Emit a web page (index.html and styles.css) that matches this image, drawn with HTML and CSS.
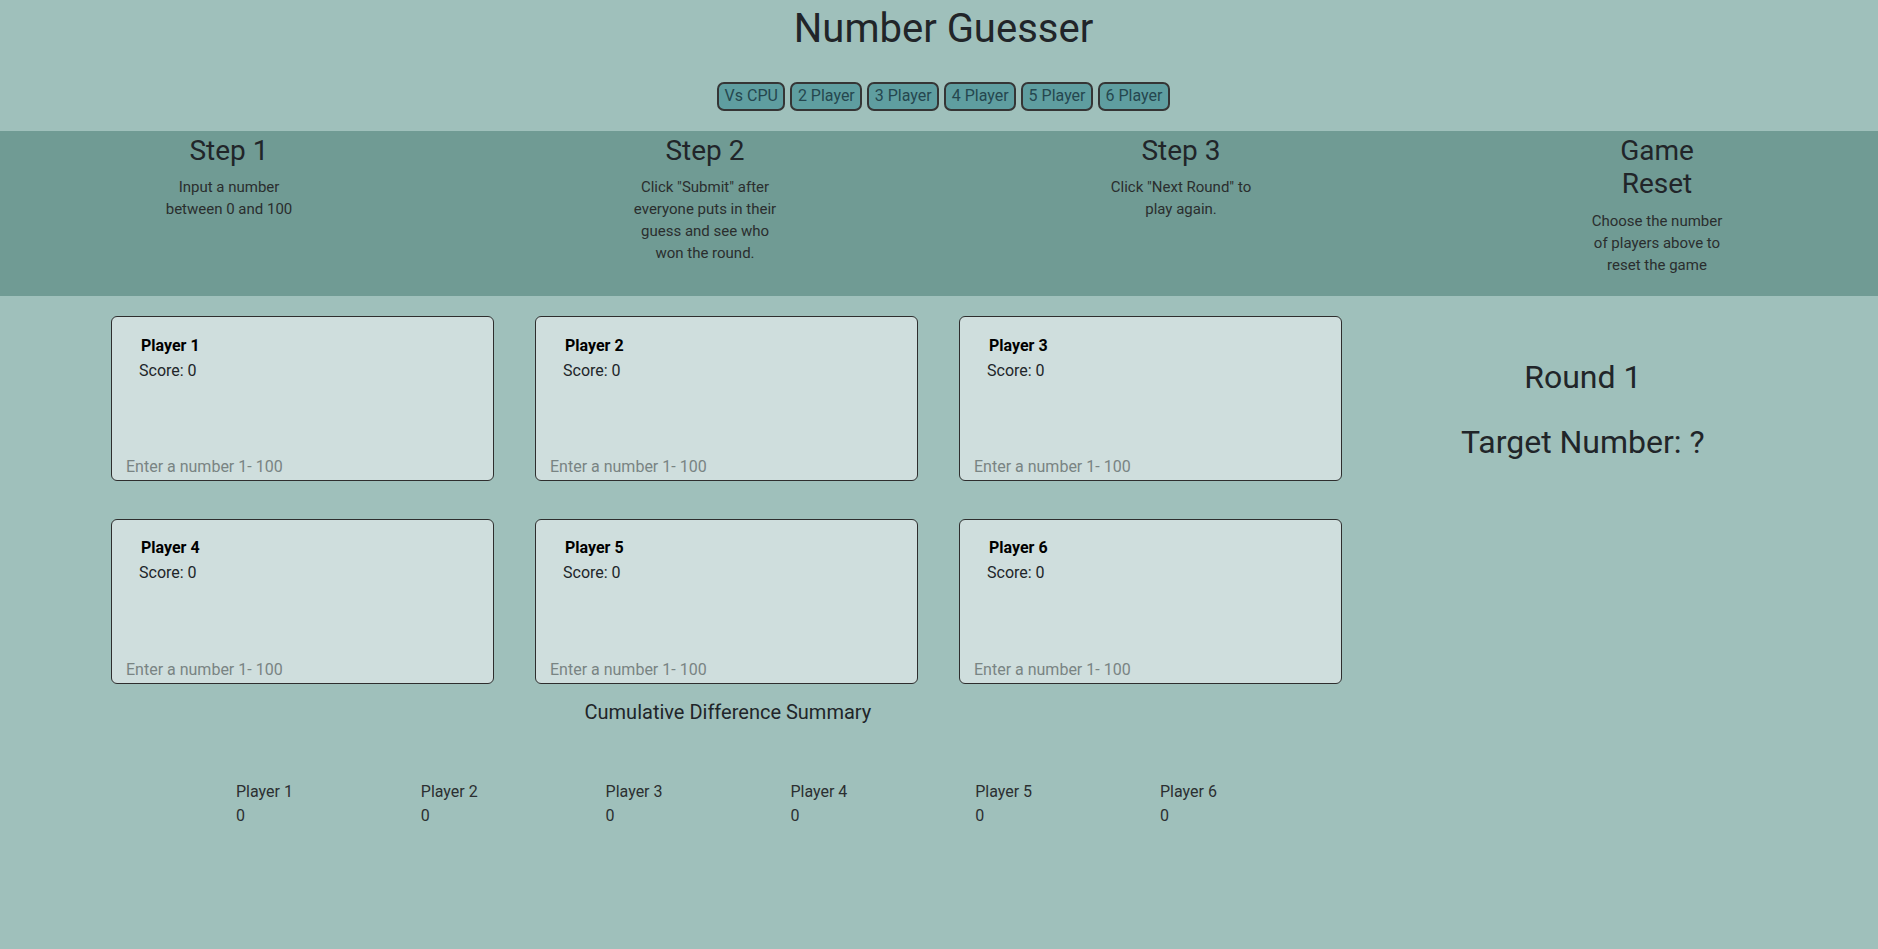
FILE: index.html
```html
<!DOCTYPE html>
<html lang="en">
<head>
<meta charset="utf-8">
<title>Number Guesser</title>
<link rel="stylesheet" href="styles.css">
</head>
<body>
<header class="top">
  <h1 class="title">Number Guesser</h1>
  <div class="modes">
    <button class="mode-btn">Vs CPU</button>
    <button class="mode-btn">2 Player</button>
    <button class="mode-btn">3 Player</button>
    <button class="mode-btn">4 Player</button>
    <button class="mode-btn">5 Player</button>
    <button class="mode-btn">6 Player</button>
  </div>
</header>
<section class="steps">
  <div class="steps-grid">
    <div class="step">
      <h2 class="step-title">Step 1</h2>
      <p class="step-text">Input a number between 0 and 100</p>
    </div>
    <div class="step">
      <h2 class="step-title">Step 2</h2>
      <p class="step-text">Click "Submit" after everyone puts in their guess and see who won the round.</p>
    </div>
    <div class="step">
      <h2 class="step-title">Step 3</h2>
      <p class="step-text">Click "Next Round" to play again.</p>
    </div>
    <div class="step">
      <h2 class="step-title">Game Reset</h2>
      <p class="step-text">Choose the number of players above to reset the game</p>
    </div>
  </div>
</section>
<main class="game">
  <div class="board">
    <div class="cards">
      <div class="card">
        <div class="card-name">Player 1</div>
        <div class="card-score">Score: 0</div>
        <input class="card-input" type="text" placeholder="Enter a number 1- 100">
      </div>
      <div class="card">
        <div class="card-name">Player 2</div>
        <div class="card-score">Score: 0</div>
        <input class="card-input" type="text" placeholder="Enter a number 1- 100">
      </div>
      <div class="card">
        <div class="card-name">Player 3</div>
        <div class="card-score">Score: 0</div>
        <input class="card-input" type="text" placeholder="Enter a number 1- 100">
      </div>
      <div class="card">
        <div class="card-name">Player 4</div>
        <div class="card-score">Score: 0</div>
        <input class="card-input" type="text" placeholder="Enter a number 1- 100">
      </div>
      <div class="card">
        <div class="card-name">Player 5</div>
        <div class="card-score">Score: 0</div>
        <input class="card-input" type="text" placeholder="Enter a number 1- 100">
      </div>
      <div class="card">
        <div class="card-name">Player 6</div>
        <div class="card-score">Score: 0</div>
        <input class="card-input" type="text" placeholder="Enter a number 1- 100">
      </div>
    </div>
    <h3 class="summary-title">Cumulative Difference Summary</h3>
    <div class="summary">
      <div class="summary-item"><div>Player 1</div><div>0</div></div>
      <div class="summary-item"><div>Player 2</div><div>0</div></div>
      <div class="summary-item"><div>Player 3</div><div>0</div></div>
      <div class="summary-item"><div>Player 4</div><div>0</div></div>
      <div class="summary-item"><div>Player 5</div><div>0</div></div>
      <div class="summary-item"><div>Player 6</div><div>0</div></div>
    </div>
  </div>
  <aside class="info">
    <h2 class="round">Round 1</h2>
    <h2 class="target">Target Number: ?</h2>
  </aside>
</main>
</body>
</html>
```
FILE: styles.css
```css
html, body {
  margin: 0;
  padding: 0;
}
body {
  background: #9fc0bb;
  font-family: Roboto, "Liberation Sans", sans-serif;
  color: #212529;
  overflow: hidden;
}
.top {
  box-sizing: border-box;
  height: 131px;
  padding: 5px 0 0 9px;
  text-align: center;
}
.title {
  margin: 0;
  font-size: 40px;
  font-weight: 400;
  line-height: 48px;
}
.modes {
  display: flex;
  justify-content: center;
  gap: 5px;
  margin-top: 29px;
}
.mode-btn {
  font-family: Roboto, "Liberation Sans", sans-serif;
  font-size: 16px;
  line-height: 24.5px;
  padding: 0 5.5px;
  margin: 0;
  background: #5f9ea0;
  border: 2px solid #353535;
  border-radius: 7px;
  color: #25474f;
}
.steps {
  box-sizing: border-box;
  height: 165px;
  background: #709b94;
  overflow: hidden;
}
.steps-grid {
  display: grid;
  grid-template-columns: repeat(4, 476px);
  margin-left: -9px;
  padding-top: 2.5px;
}
.step {
  text-align: center;
}
.step-title {
  max-width: 144px;
  margin: 0 auto 9px;
  font-size: 28px;
  font-weight: 400;
  line-height: 33.6px;
}
.step-text {
  max-width: 144px;
  margin: 0 auto;
  font-size: 15px;
  line-height: 22px;
  color: #2a2e2e;
}
.game {
  display: flex;
  padding: 20px 0 0 111px;
}
.cards {
  display: grid;
  grid-template-columns: repeat(3, 383px);
  column-gap: 41px;
  row-gap: 37.5px;
}
.card {
  box-sizing: border-box;
  height: 165px;
  border: 1px solid #2e2e2e;
  border-radius: 6px;
  background: #cfdedd;
  display: flex;
  flex-direction: column;
  padding-top: 15.5px;
}
.card-name {
  padding-left: 29px;
  font-size: 16px;
  font-weight: 700;
  line-height: 26px;
  color: #000;
}
.card-score {
  padding-left: 27px;
  font-size: 16px;
  line-height: 24px;
}
.card-input {
  margin: auto 0 1.5px;
  height: 24px;
  box-sizing: border-box;
  border: 0;
  padding: 0 0 0 14px;
  background: transparent;
  font-family: Roboto, "Liberation Sans", sans-serif;
  font-size: 16px;
  color: #212529;
  outline: none;
}
.card-input::placeholder {
  color: #798483;
  opacity: 1;
}
.summary-title {
  margin: 16px 0 0;
  font-size: 20px;
  font-weight: 400;
  line-height: 24px;
  text-align: center;
}
.summary {
  display: grid;
  grid-template-columns: repeat(6, 184.8px);
  margin: 56px 0 0 125px;
  font-size: 16px;
  line-height: 24px;
  color: #2b2f31;
}
.info {
  width: 476px;
  padding-top: 42px;
  text-align: center;
}
.round,
.target {
  margin: 0 0 27px;
  font-size: 32px;
  font-weight: 400;
  line-height: 38.4px;
}
```
